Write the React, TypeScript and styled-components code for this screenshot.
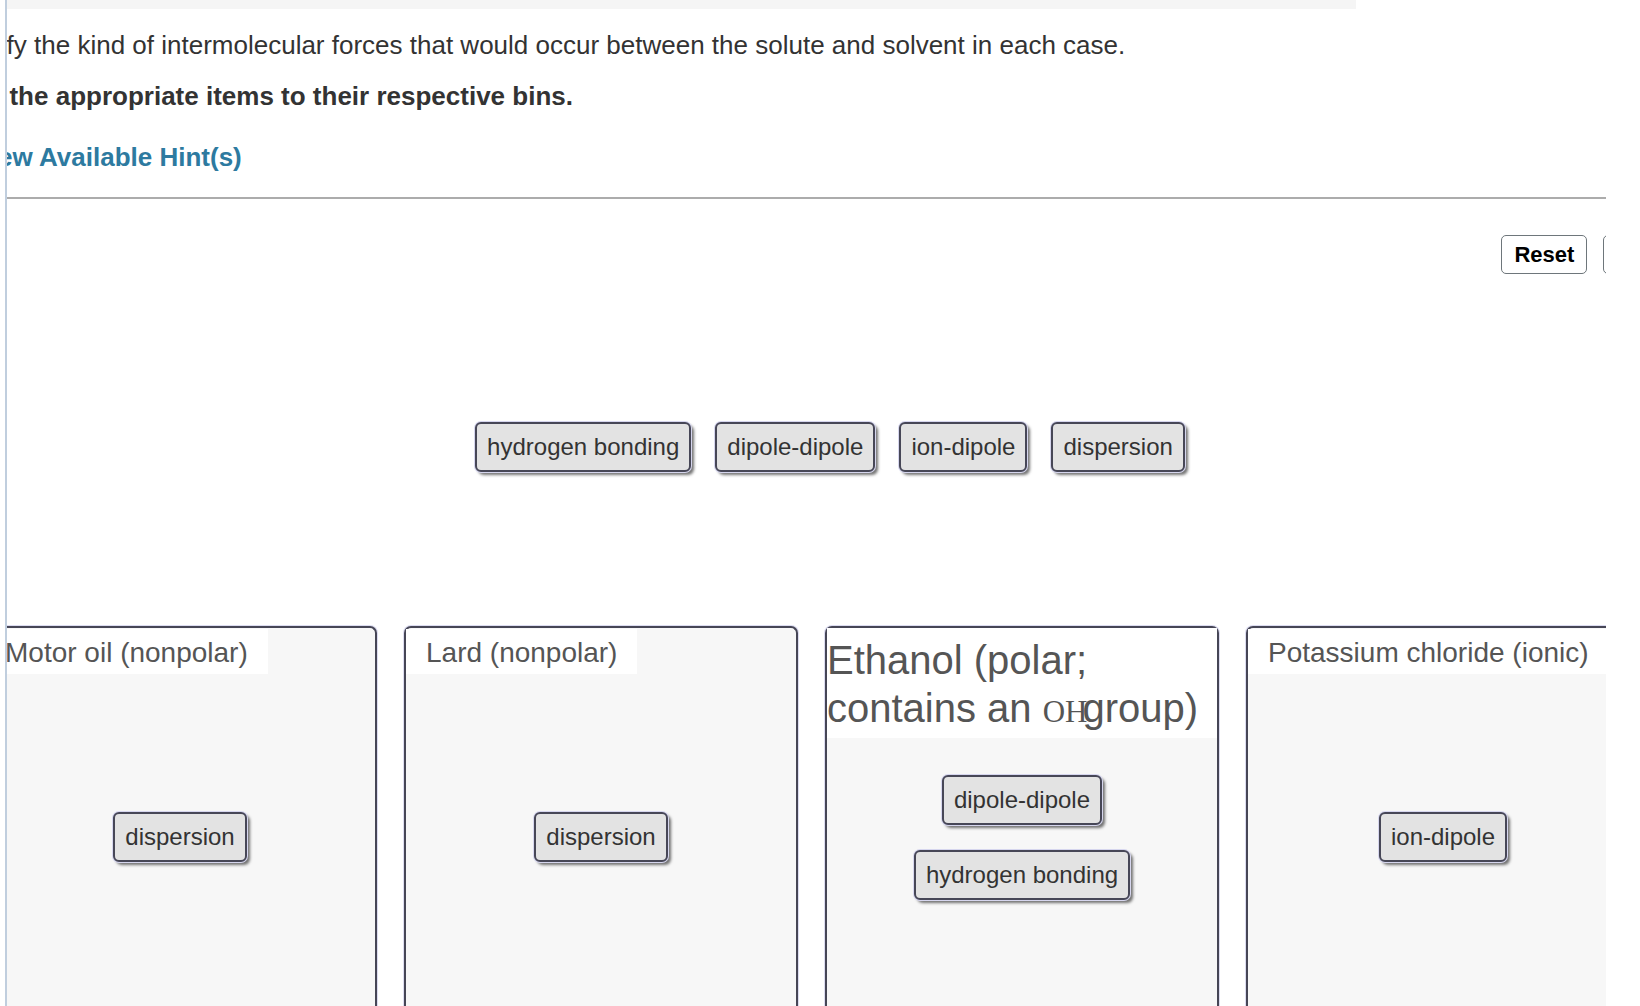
import React from 'react';
import styled, {createGlobalStyle} from 'styled-components';

const GlobalStyle = createGlobalStyle`
  html, body {
    margin: 0;
    padding: 0;
    background: #fff;
    overflow: hidden;
  }
  body {
    font-family: "Liberation Sans", Arial, Helvetica, sans-serif;
  }
`;

const Page = styled.div`
  display: flex;
  width: 1640px;
  height: 1006px;
  overflow: hidden;
  background: #fff;
`;

const Viewport = styled.div`
  margin-left: 5px;
  width: 1599px;
  height: 100%;
  border-left: 2px solid #c0cede;
  overflow: hidden;
`;

const TopBand = styled.div`
  width: 1349px;
  height: 9px;
  background: #f5f5f5;
`;

// scrolled content, starts left of the visible area
const Content = styled.div`
  width: 1760px;
  margin-left: -64px;
  display: flex;
  flex-direction: column;
`;

type TextLineProps = {
    $bold?: boolean;
    $gap: number;
}
const TextLine = styled.div`
  margin-top: ${(props: TextLineProps) => props.$gap}px;
  font-size: 26px;
  line-height: 30px;
  color: #333;
  font-weight: ${(props: TextLineProps) => props.$bold ? 700 : 400};
  white-space: nowrap;
`;

const HintLink = styled.a`
  display: block;
  margin-top: 31px;
  margin-left: 31px;
  font-size: 26px;
  line-height: 30px;
  font-weight: 700;
  color: #2d7aa0;
  text-decoration: none;
  white-space: nowrap;
  cursor: pointer;
`;

const Rule = styled.div`
  margin-top: 25px;
  height: 2px;
  background: #acacac;
`;

const Toolbar = styled.div`
  display: flex;
  justify-content: flex-end;
  gap: 16px;
  margin-top: 36px;
  padding-right: 26px;
`;

const ToolButton = styled.button`
  box-sizing: border-box;
  height: 39px;
  padding: 0 12px;
  border: 1.5px solid #6e767b;
  border-radius: 5px;
  background: #fff;
  font-family: "Liberation Sans", Arial, sans-serif;
  font-size: 22px;
  font-weight: 700;
  color: #000;
  cursor: pointer;
`;

const TokenRow = styled.div`
  display: flex;
  justify-content: center;
  gap: 24px;
  margin-top: 148px;
  padding-left: 14px;
`;

const Token = styled.div`
  box-sizing: border-box;
  height: 50px;
  padding: 0 10px;
  line-height: 46px;
  font-size: 24px;
  color: #333;
  white-space: nowrap;
  background: #e3e3e3;
  border: 2px solid #474757;
  border-radius: 6px;
  box-shadow: 0 0 0 1px #d6d6ee, 3px 3px 3px rgba(0, 0, 0, 0.55);
  user-select: none;
  cursor: move;
`;

const BinRow = styled.div`
  display: flex;
  gap: 27px;
  margin-top: 154px;
  margin-left: 40px;
`;

const Bin = styled.div`
  box-sizing: border-box;
  flex: 0 0 394px;
  height: 420px;
  display: grid;
  background: #f7f7f7;
  border: 2.5px solid #464656;
  border-bottom: none;
  border-radius: 7px 7px 0 0;
  box-shadow: 0 0 0 1px #dcdcf0;
`;

type BinHeaderProps = {
    $large?: boolean;
}
const BinHeader = styled.div`
  grid-area: 1 / 1;
  align-self: start;
  justify-self: ${(props: BinHeaderProps) => props.$large ? 'stretch' : 'start'};
  margin-top: ${(props: BinHeaderProps) => props.$large ? '0' : '1px'};
  padding: ${(props: BinHeaderProps) => props.$large ? '8px 0 2px 0' : '3px 20px 0 20px'};
  height: ${(props: BinHeaderProps) => props.$large ? 'auto' : '42px'};
  background: #fff;
  color: #555;
  font-size: ${(props: BinHeaderProps) => props.$large ? '40px' : '28px'};
  line-height: ${(props: BinHeaderProps) => props.$large ? '48px' : '42px'};
  white-space: ${(props: BinHeaderProps) => props.$large ? 'normal' : 'nowrap'};
`;

const Formula = styled.span`
  font-family: "Liberation Serif", "Times New Roman", serif;
  font-size: 31px;
  margin-right: -5px;
`;

const DropZone = styled.div`
  grid-area: 1 / 1;
  display: flex;
  flex-direction: column;
  align-items: center;
  justify-content: center;
  gap: 25px;
`;

type BinData = {
    title: React.ReactNode;
    large?: boolean;
    items: string[];
}

const bins: BinData[] = [
    {title: 'Motor oil (nonpolar)', items: ['dispersion']},
    {title: 'Lard (nonpolar)', items: ['dispersion']},
    {
        title: <>Ethanol (polar;<br/>contains an <Formula>OH</Formula>group)</>,
        large: true,
        items: ['dipole-dipole', 'hydrogen bonding'],
    },
    {title: 'Potassium chloride (ionic)', items: ['ion-dipole']},
];

const pool = ['hydrogen bonding', 'dipole-dipole', 'ion-dipole', 'dispersion'];

const App: React.FC = () => {
    return (
        <>
            <GlobalStyle/>
            <Page>
                <Viewport>
                    <TopBand/>
                    <Content>
                        <TextLine $gap={21}>
                            Identify the kind of intermolecular forces that would occur between the solute and solvent in each case.
                        </TextLine>
                        <TextLine $gap={21} $bold>
                            Drag the appropriate items to their respective bins.
                        </TextLine>
                        <HintLink>View Available Hint(s)</HintLink>
                        <Rule/>
                        <Toolbar>
                            <ToolButton>Reset</ToolButton>
                            <ToolButton>Help</ToolButton>
                        </Toolbar>
                        <TokenRow>
                            {pool.map((item) => <Token key={item}>{item}</Token>)}
                        </TokenRow>
                        <BinRow>
                            {bins.map((bin, i) => (
                                <Bin key={i}>
                                    <BinHeader $large={bin.large}>{bin.title}</BinHeader>
                                    <DropZone>
                                        {bin.items.map((item) => <Token key={item}>{item}</Token>)}
                                    </DropZone>
                                </Bin>
                            ))}
                        </BinRow>
                    </Content>
                </Viewport>
            </Page>
        </>
    );
};

export default App;
